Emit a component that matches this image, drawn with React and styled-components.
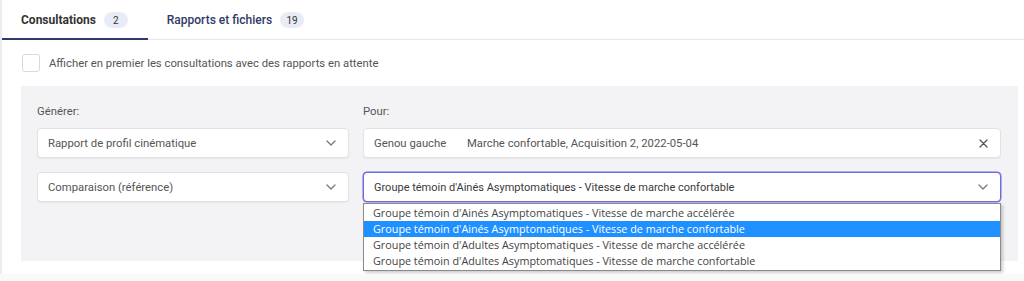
import React from 'react'
import styled, { createGlobalStyle } from 'styled-components'

const GlobalStyle = createGlobalStyle`
  body {
    margin: 0;
    background: #f8f9f9;
    font-family: Roboto, "Liberation Sans", sans-serif;
  }
`

const Chevron = () => (
  <svg width="10" height="6" viewBox="0 0 10 6" fill="none">
    <path d="M1 1l4 4 4-4" stroke="#777" strokeWidth="1.3" strokeLinecap="round" strokeLinejoin="round" />
  </svg>
)

const Cross = () => (
  <svg width="9" height="9" viewBox="0 0 9 9" fill="none">
    <path d="M1 1l7 7M8 1l-7 7" stroke="#555" strokeWidth="1.3" strokeLinecap="round" />
  </svg>
)

const options = [
  "Groupe témoin d'Ainés Asymptomatiques - Vitesse de marche accélérée",
  "Groupe témoin d'Ainés Asymptomatiques - Vitesse de marche confortable",
  "Groupe témoin d'Adultes Asymptomatiques - Vitesse de marche accélérée",
  "Groupe témoin d'Adultes Asymptomatiques - Vitesse de marche confortable",
]

const App = () => {
  return (
    <>
      <GlobalStyle />
      <Card>
        <Tabs>
          <Tab active>
            Consultations <Badge>2</Badge>
          </Tab>
          <Tab>
            Rapports et fichiers <Badge>19</Badge>
          </Tab>
        </Tabs>
        <CheckRow>
          <Box />
          <CheckLabel>Afficher en premier les consultations avec des rapports en attente</CheckLabel>
        </CheckRow>
        <Panel>
          <Grid>
            <Label>Générer:</Label>
            <Label>Pour:</Label>
            <Field>
              <Value>Rapport de profil cinématique</Value>
              <Chevron />
            </Field>
            <Field>
              <Value>
                <Part>Genou gauche</Part>Marche confortable, Acquisition 2, 2022-05-04
              </Value>
              <Cross />
            </Field>
            <Field>
              <Value>Comparaison (référence)</Value>
              <Chevron />
            </Field>
            <SelectWrap>
              <Field focused>
                <Value dark>Groupe témoin d'Ainés Asymptomatiques - Vitesse de marche confortable</Value>
                <Chevron />
              </Field>
              <List>
                {options.map((o, i) => (
                  <Option key={o} selected={i === 1}>{o}</Option>
                ))}
              </List>
            </SelectWrap>
          </Grid>
        </Panel>
      </Card>
    </>
  )
}

export default App

const Card = styled.div`
  background: #fff;
  border-left: 2px solid #ececec;
  padding-bottom: 13px;
`

const Tabs = styled.div`
  display: flex;
  height: 39px;
  border-bottom: 1px solid #e8e8e8;
`

const Tab = styled.div`
  display: flex;
  align-items: center;
  gap: 8px;
  padding: 0 20px 0 19px;
  font-size: 12px;
  font-weight: ${p => (p.active ? 700 : 500)};
  color: ${p => (p.active ? '#333' : '#2f3a66')};
  box-shadow: ${p => (p.active ? 'inset 0 -2px 0 #2d3a6a' : 'none')};
  margin-bottom: -1px;
`

const Badge = styled.span`
  display: inline-flex;
  align-items: center;
  justify-content: center;
  min-width: 24px;
  height: 16px;
  padding: 0 4px;
  box-sizing: border-box;
  border-radius: 8px;
  background: #e8ecf7;
  color: #333;
  font-size: 10px;
  font-weight: 400;
`

const CheckRow = styled.div`
  display: flex;
  align-items: center;
  gap: 9px;
  height: 46px;
  padding-left: 20px;
`

const Box = styled.div`
  width: 16px;
  height: 16px;
  border: 1px solid #d9d9d9;
  border-radius: 3px;
  background: #fff;
`

const CheckLabel = styled.span`
  font-size: 11.3px;
  color: #555;
`

const Panel = styled.div`
  background: #f3f3f6;
  margin: 0 6px 0 19px;
  padding: 18px 17px 59px 16px;
`

const Grid = styled.div`
  display: grid;
  grid-template-columns: 312px 1fr;
  column-gap: 14px;
  row-gap: 14px;
  & > :nth-child(1), & > :nth-child(2) {
    margin-bottom: -6px;
  }
`

const Label = styled.div`
  font-size: 11.3px;
  color: #555;
  line-height: 16px;
`

const Field = styled.div`
  display: flex;
  align-items: center;
  justify-content: space-between;
  height: 30px;
  box-sizing: border-box;
  padding: 0 12px 0 10px;
  background: #fff;
  border: 1px solid ${p => (p.focused ? '#6f6ae0' : '#e2e2e6')};
  box-shadow: ${p => (p.focused ? '0 0 0 0.5px #6f6ae0' : '0 1px 1px rgba(0,0,0,0.05)')};
  border-radius: 4px;
`

const Value = styled.span`
  font-size: ${p => (p.dark ? '11px' : '11.3px')};
  color: ${p => (p.dark ? '#3a3a3a' : '#555')};
  white-space: nowrap;
`

const Part = styled.span`
  display: inline-block;
  width: 93px;
`

const SelectWrap = styled.div`
  position: relative;
`

const List = styled.div`
  position: absolute;
  left: 0;
  right: 0;
  top: 31px;
  background: #fff;
  border: 1px solid #8a8a8a;
  box-shadow: 2px 2px 3px rgba(0, 0, 0, 0.2);
  padding: 1px 0;
  z-index: 2;
`

const Option = styled.div`
  height: 16px;
  line-height: 16px;
  padding-left: 9px;
  font-family: "Open Sans", "Liberation Sans", sans-serif;
  font-size: 10.8px;
  color: ${p => (p.selected ? '#fff' : '#444')};
  background: ${p => (p.selected ? '#1e90ff' : 'transparent')};
  white-space: nowrap;
`
